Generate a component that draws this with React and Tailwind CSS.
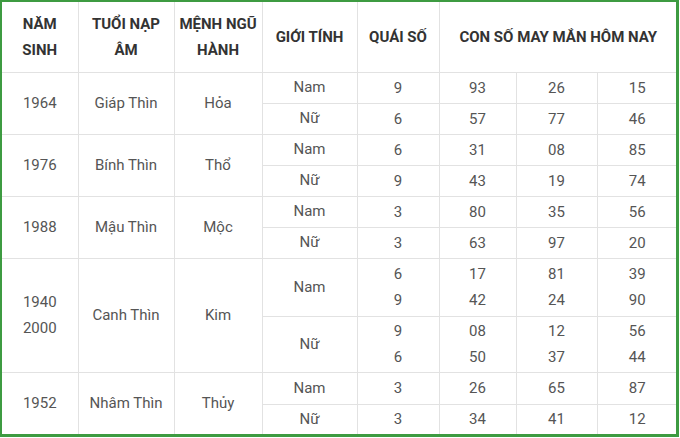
import React from "react";

const simple = [
  { year: ["1964"], tuoi: "Giáp Thìn", menh: "Hỏa", rows: [
    { g: "Nam", q: ["9"], n: [["93"], ["26"], ["15"]] },
    { g: "Nữ", q: ["6"], n: [["57"], ["77"], ["46"]] },
  ], h: ["h-[31px]", "h-[31px]"] },
  { year: ["1976"], tuoi: "Bính Thìn", menh: "Thổ", rows: [
    { g: "Nam", q: ["6"], n: [["31"], ["08"], ["85"]] },
    { g: "Nữ", q: ["9"], n: [["43"], ["19"], ["74"]] },
  ], h: ["h-[31px]", "h-[31px]"] },
  { year: ["1988"], tuoi: "Mậu Thìn", menh: "Mộc", rows: [
    { g: "Nam", q: ["3"], n: [["80"], ["35"], ["56"]] },
    { g: "Nữ", q: ["3"], n: [["63"], ["97"], ["20"]] },
  ], h: ["h-[31px]", "h-[31px]"] },
  { year: ["1940", "2000"], tuoi: "Canh Thìn", menh: "Kim", rows: [
    { g: "Nam", q: ["6", "9"], n: [["17", "42"], ["81", "24"], ["39", "90"]] },
    { g: "Nữ", q: ["9", "6"], n: [["08", "50"], ["12", "37"], ["56", "44"]] },
  ], h: ["h-[58px]", "h-[56px]"] },
  { year: ["1952"], tuoi: "Nhâm Thìn", menh: "Thủy", rows: [
    { g: "Nam", q: ["3"], n: [["26"], ["65"], ["87"]] },
    { g: "Nữ", q: ["3"], n: [["34"], ["41"], ["12"]] },
  ], h: ["h-[32px]", "h-[30px]"] },
];

const td = "border border-[#e2e2e2] text-center align-middle p-0";
const th = "border border-[#e2e2e2] text-center align-middle p-0 font-bold text-[#333] leading-[26px]";

function Lines({ items }) {
  return (
    <div className="flex flex-col items-center leading-[26px]">
      {items.map((t, i) => (
        <span key={i}>{t}</span>
      ))}
    </div>
  );
}

export default function App() {
  return (
    <div className="w-[680px] h-[438px] bg-white">
      <div
        className="w-[679px] h-[437px] border-l-2 border-t-2 border-r-[3px] border-b-[3px] border-[#3d9b41] overflow-hidden"
        style={{ fontFamily: "Roboto, 'Liberation Sans', sans-serif" }}
      >
        <table className="border-collapse border-hidden table-fixed w-[675px] text-[15px] text-[#555]">
          <colgroup>
            <col className="w-[76px]" />
            <col className="w-[96px]" />
            <col className="w-[88px]" />
            <col className="w-[95px]" />
            <col className="w-[82px]" />
            <col className="w-[77px]" />
            <col className="w-[81px]" />
            <col className="w-[80px]" />
          </colgroup>
          <thead>
            <tr className="h-[70px]">
              <th className={th}>NĂM<br />SINH</th>
              <th className={th}>TUỔI NẠP<br />ÂM</th>
              <th className={th}>MỆNH NGŨ<br />HÀNH</th>
              <th className={th}>GIỚI TÍNH</th>
              <th className={th}>QUÁI SỐ</th>
              <th className={th} colSpan={3}>CON SỐ MAY MẮN HÔM NAY</th>
            </tr>
          </thead>
          <tbody>
            {simple.map((grp, gi) =>
              grp.rows.map((r, ri) => (
                <tr key={gi + "-" + ri} className={grp.h[ri]}>
                  {ri === 0 && (
                    <>
                      <td className={td} rowSpan={2}><Lines items={grp.year} /></td>
                      <td className={td} rowSpan={2}>{grp.tuoi}</td>
                      <td className={td} rowSpan={2}>{grp.menh}</td>
                    </>
                  )}
                  <td className={td}>{r.g}</td>
                  <td className={td}><Lines items={r.q} /></td>
                  {r.n.map((c, ci) => (
                    <td key={ci} className={td}><Lines items={c} /></td>
                  ))}
                </tr>
              ))
            )}
          </tbody>
        </table>
      </div>
    </div>
  );
}
